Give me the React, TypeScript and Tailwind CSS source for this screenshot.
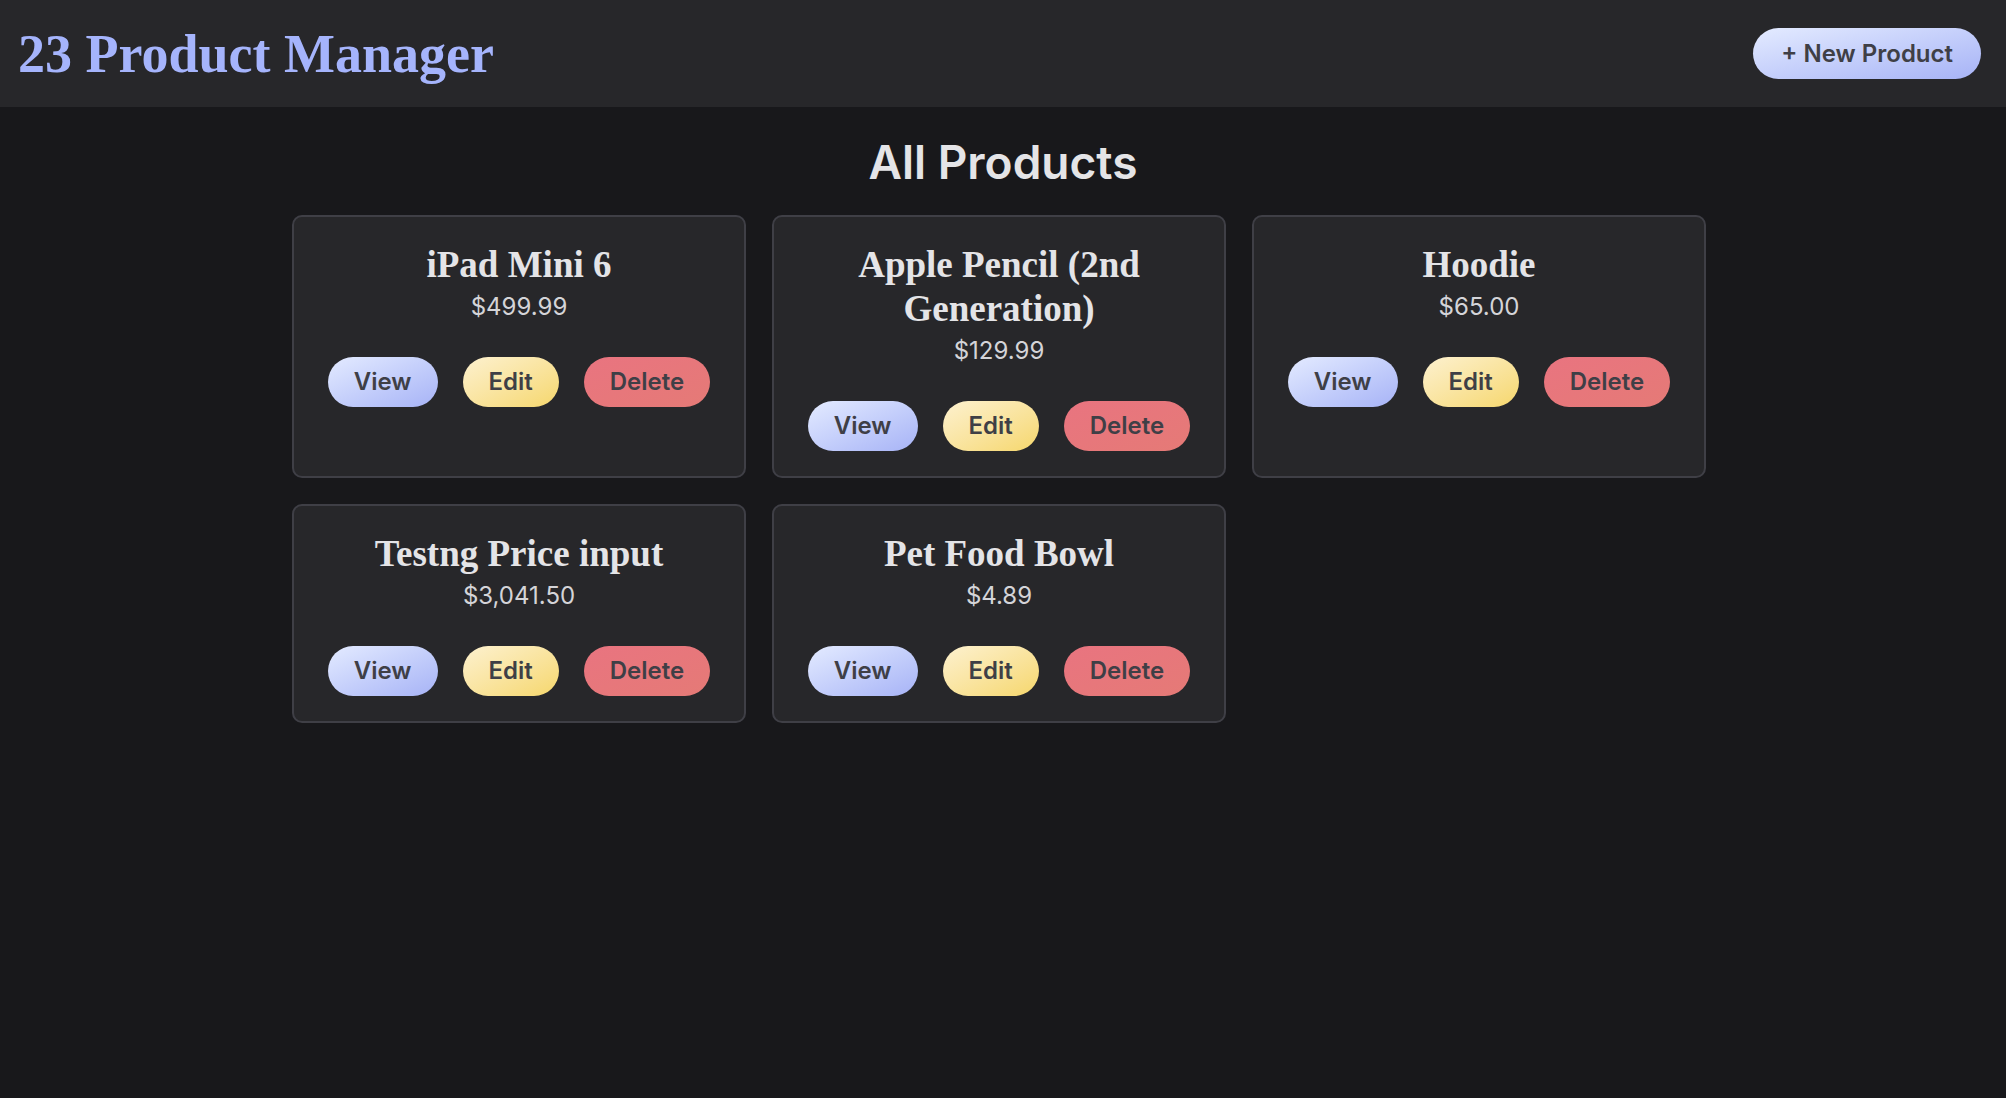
import React from 'react'

const products = [
  { name: 'iPad Mini 6', price: 499.99 },
  { name: 'Apple Pencil (2nd Generation)', price: 129.99 },
  { name: 'Hoodie', price: 65 },
  { name: 'Testng Price input', price: 3041.5 },
  { name: 'Pet Food Bowl', price: 4.89 },
]

const money = (n: number) =>
  '$' + n.toLocaleString('en-US', { minimumFractionDigits: 2, maximumFractionDigits: 2 })

const pill =
  'h-[50px] px-[26px] rounded-full flex items-center text-[24px] font-semibold text-[#3f3f46] leading-none'

function ProductCard({ product }: { product: typeof products[0] }) {
  return (
    <div className="bg-[#27272a] border-2 border-[#3f3f46] rounded-[10px] px-[24px] pt-[26px] pb-[25px] flex flex-col items-center text-center">
      {/* Name + price */}
      <h3 className="font-['Liberation_Serif',serif] font-bold text-[37px] leading-[44px] text-[#e4e4e7] px-4">
        {product.name}
      </h3>
      <p className="mt-[2px] font-['Inter',sans-serif] text-[24px] leading-[36px] text-[#d4d4d8]">
        {money(product.price)}
      </p>
      {/* Actions */}
      <div className="mt-[32px] flex gap-[25px] font-['Inter',sans-serif]">
        <button className={`${pill} bg-linear-to-br from-[#e4ebff] to-[#a7b3f6]`}>View</button>
        <button className={`${pill} bg-linear-to-br from-[#fdf1cf] to-[#f6d76b]`}>Edit</button>
        <button className={`${pill} bg-linear-to-br from-[#e97480] to-[#e57a76]`}>Delete</button>
      </div>
    </div>
  )
}

export default function App() {
  return (
    <div className="min-h-screen bg-[#18181b] font-['Inter',sans-serif]">
      <header className="h-[107px] bg-[#27272a] flex items-center justify-between pl-[18px] pr-[25px]">
        <h1 className="font-['Liberation_Serif',serif] font-bold text-[54px] text-[#a5b4fc] leading-none">
          23 Product Manager
        </h1>
        <button className="h-[51px] px-[28px] rounded-full flex items-center text-[24px] font-semibold text-[#3f3f46] bg-linear-to-br from-[#e4ebff] to-[#a7b3f6]">
          + New Product
        </button>
      </header>

      <main className="pt-[28px]">
        <h2 className="text-center text-[46px] leading-[54px] font-semibold text-[#e4e4e7]">All Products</h2>
        <div className="mt-[26px] w-[1422px] mx-auto grid grid-cols-[repeat(3,454px)] gap-[26px]">
          {products.map((p) => (
            <ProductCard key={p.name} product={p} />
          ))}
        </div>
      </main>
    </div>
  )
}
